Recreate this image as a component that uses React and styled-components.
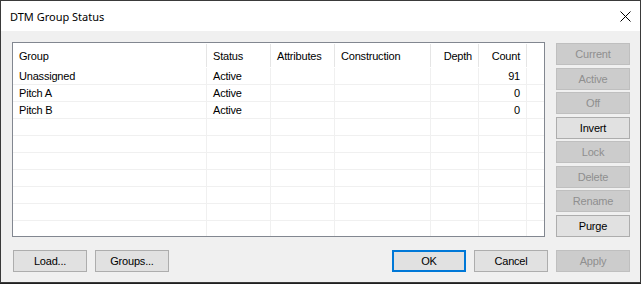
import React from 'react'
import styled, { createGlobalStyle } from 'styled-components'

const GlobalStyle = createGlobalStyle`
  html, body {
    margin: 0;
    padding: 0;
    background: #202020;
  }
  * {
    box-sizing: border-box;
  }
`

const Window = styled.div`
  width: 641px;
  height: 283px;
  border: 1px solid #3a3a3a;
  background: #f0f0f0;
  display: flex;
  flex-direction: column;
  font-family: "Liberation Sans", Arial, sans-serif;
  font-size: 11px;
  letter-spacing: -0.2px;
  color: #000;
`

const TitleBar = styled.div`
  height: 30px;
  background: #fff;
  display: flex;
  align-items: center;
  justify-content: space-between;
  padding-left: 9px;
`

const Title = styled.span`
  font-family: "Noto Sans", "Open Sans", sans-serif;
  font-size: 11px;
  letter-spacing: 0;
`

const CloseBox = styled.div`
  width: 30px;
  height: 30px;
  display: flex;
  align-items: center;
  justify-content: center;
`

const Body = styled.div`
  flex: 1;
  display: flex;
  flex-direction: column;
  padding: 11px 10px 10px 11px;
`

const Main = styled.div`
  display: flex;
  gap: 11px;
`

const List = styled.div`
  width: 533px;
  height: 195px;
  border: 1px solid #828790;
  background: #fff;
  overflow: hidden;
`

const cols = '194px 64px 64px 96px 48px 48px 1fr'

const HeaderRow = styled.div`
  display: grid;
  grid-template-columns: ${cols};
  height: 25px;
`

const HeaderCell = styled.div`
  display: flex;
  align-items: center;
  justify-content: ${({ $right }) => ($right ? 'flex-end' : 'flex-start')};
  padding: 0 6px 0 6px;
  border-right: ${({ $last }) => ($last ? 'none' : '1px solid #e5e5e5')};
  margin: 1px 0 1px;
  white-space: nowrap;
`

const Row = styled.div`
  display: grid;
  grid-template-columns: ${cols};
  height: 17px;
`

const Cell = styled.div`
  display: flex;
  align-items: center;
  justify-content: ${({ $right }) => ($right ? 'flex-end' : 'flex-start')};
  padding: 0 6px 0 6px;
  border-bottom: 1px solid #f0f0f0;
  border-right: ${({ $last }) => ($last ? 'none' : '1px solid #f0f0f0')};
  white-space: nowrap;
`

const SideButtons = styled.div`
  width: 74px;
  height: 195px;
  display: flex;
  flex-direction: column;
  justify-content: space-between;
  padding-top: 1px;
`

const Button = styled.button`
  width: 74px;
  height: 22px;
  padding: 0;
  font-family: "Liberation Sans", Arial, sans-serif;
  font-size: 11px;
  letter-spacing: -0.2px;
  color: ${({ disabled }) => (disabled ? '#8f8f8f' : '#000')};
  background: ${({ disabled }) => (disabled ? '#cccccc' : '#e1e1e1')};
  border: ${({ disabled, $default }) =>
    $default ? '2px solid #0078d7' : disabled ? '1px solid #bfbfbf' : '1px solid #adadad'};
  border-radius: 0;
  outline: none;
`

const BottomRow = styled.div`
  display: flex;
  justify-content: space-between;
  margin-top: auto;
  padding-left: 1px;
`

const Group = styled.div`
  display: flex;
  gap: 8px;
`

const columns = [
  { label: 'Group' },
  { label: 'Status' },
  { label: 'Attributes' },
  { label: 'Construction' },
  { label: 'Depth', right: true },
  { label: 'Count', right: true },
]

const data = [
  ['Unassigned', 'Active', '', '', '', '91'],
  ['Pitch A', 'Active', '', '', '', '0'],
  ['Pitch B', 'Active', '', '', '', '0'],
]

const rows = [...data, ...Array.from({ length: 7 }, () => ['', '', '', '', '', ''])]

const side = [
  ['Current', true],
  ['Active', true],
  ['Off', true],
  ['Invert', false],
  ['Lock', true],
  ['Delete', true],
  ['Rename', true],
  ['Purge', false],
]

const App = () => {
  return (
    <>
      <GlobalStyle />
      <Window>
        <TitleBar>
          <Title>DTM Group Status</Title>
          <CloseBox>
            <svg width="11" height="11" viewBox="0 0 11 11">
              <path d="M0.5 0.5 L10.5 10.5 M10.5 0.5 L0.5 10.5" stroke="#000" strokeWidth="1" />
            </svg>
          </CloseBox>
        </TitleBar>
        <Body>
          <Main>
            <List>
              <HeaderRow>
                {columns.map(c => (
                  <HeaderCell key={c.label} $right={c.right}>{c.label}</HeaderCell>
                ))}
                <HeaderCell $last />
              </HeaderRow>
              {rows.map((r, i) => (
                <Row key={i}>
                  {r.map((v, j) => (
                    <Cell key={j} $right={columns[j].right}>{v}</Cell>
                  ))}
                  <Cell $last />
                </Row>
              ))}
            </List>
            <SideButtons>
              {side.map(([label, dis]) => (
                <Button key={label} disabled={dis}>{label}</Button>
              ))}
            </SideButtons>
          </Main>
          <BottomRow>
            <Group>
              <Button>Load...</Button>
              <Button>Groups...</Button>
            </Group>
            <Group>
              <Button $default>OK</Button>
              <Button>Cancel</Button>
              <Button disabled>Apply</Button>
            </Group>
          </BottomRow>
        </Body>
      </Window>
    </>
  )
}

export default App
